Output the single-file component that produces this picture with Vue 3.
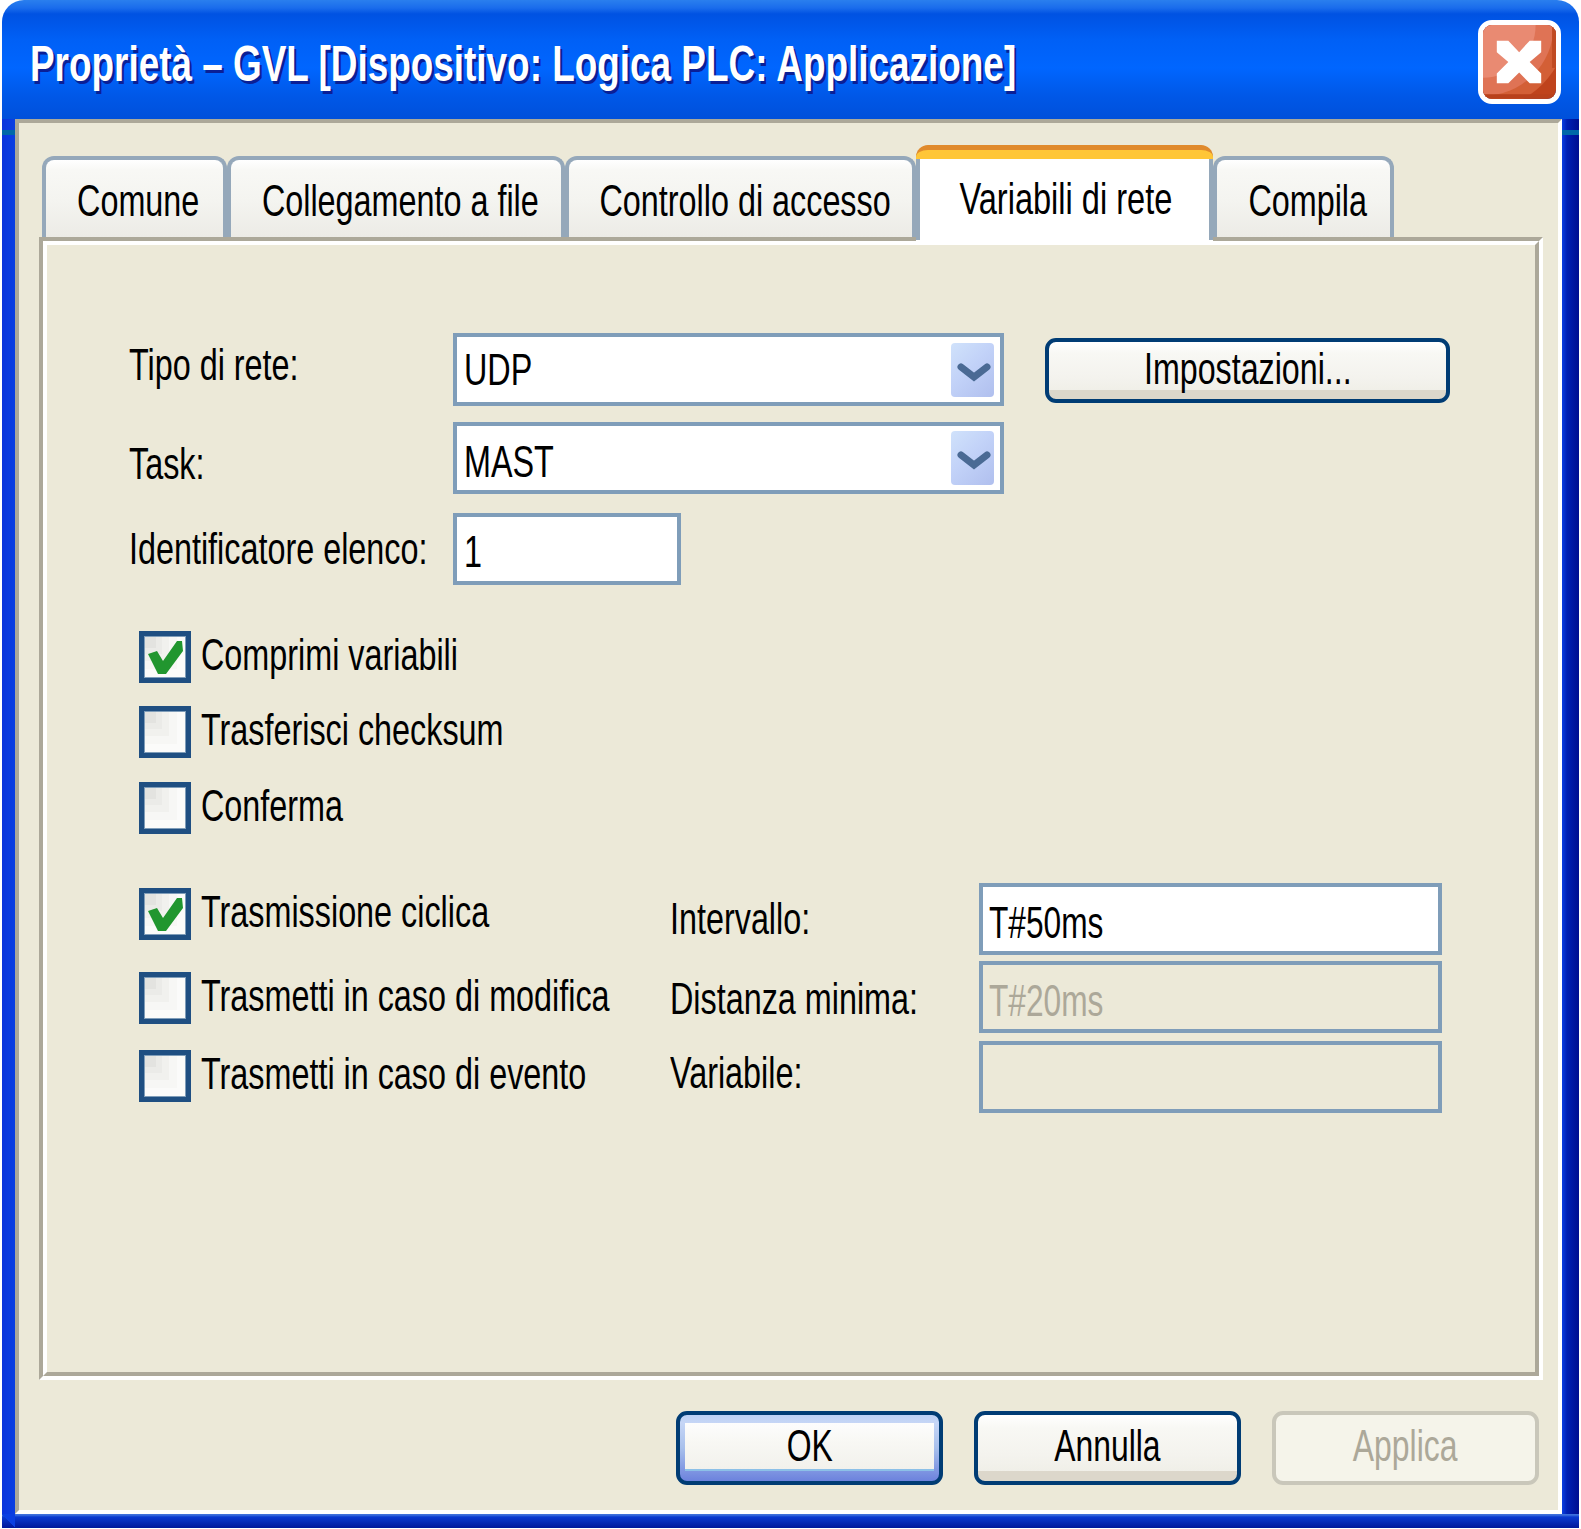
<script setup>
const tabs = [
  { label: 'Comune', width: 185, nudge: 8 },
  { label: 'Collegamento a file', width: 338, nudge: 8 },
  { label: 'Controllo di accesso', width: 351, nudge: 9 },
  { label: 'Variabili di rete', width: 297, nudge: 3, active: true },
  { label: 'Compila', width: 181, nudge: 8 },
]
const upperChecks = [
  { label: 'Comprimi variabili', checked: true, cls: 'c1' },
  { label: 'Trasferisci checksum', checked: false, cls: 'c2' },
  { label: 'Conferma', checked: false, cls: 'c3' },
]
const lowerRows = [
  { label: 'Trasmissione ciclica', checked: true, side: 'Intervallo:', value: 'T#50ms', cls: 'r1' },
  { label: 'Trasmetti in caso di modifica', checked: false, side: 'Distanza minima:', value: 'T#20ms', off: true, cls: 'r2' },
  { label: 'Trasmetti in caso di evento', checked: false, side: 'Variabile:', value: '', off: true, cls: 'r3' },
]
</script>

<template>
  <div class="window">
    <header class="titlebar">
      <span class="title t">Proprietà – GVL [Dispositivo: Logica PLC: Applicazione]</span>
      <div class="close">
        <svg viewBox="398 78 222 224" width="73" height="74">
          <rect x="398" y="78" width="222" height="224" rx="8" fill="#bf431c" />
          <circle cx="398" cy="78" r="255" fill="#d35f36" />
          <circle cx="398" cy="78" r="215" fill="#df7355" />
          <circle cx="398" cy="78" r="160" fill="#e98a72" />
          <rect x="398" y="288" width="222" height="14" fill="#b8411c" />
          <rect x="608" y="78" width="12" height="130" fill="#c04a22" />
          <polygon fill="#fff" points="440,125 475,125 508,160 540,125 575,125 575,160 540,190 575,225 575,255 540,255 508,222 475,255 440,255 440,225 475,190 440,160" />
        </svg>
      </div>
    </header>

    <div class="frame">
      <div class="client">
        <nav class="tabs">
          <div
            v-for="tab in tabs"
            :key="tab.label"
            class="tab"
            :class="{ active: tab.active }"
            :style="{ width: tab.width + 'px', paddingLeft: tab.nudge + 'px' }"
          >
            <span class="t center">{{ tab.label }}</span>
          </div>
        </nav>

        <section class="panel">
          <div class="panel-in">
            <div class="row row-net">
              <label class="lab lab-net"><span class="t">Tipo di rete:</span></label>
              <div class="combo">
                <span class="t val">UDP</span>
                <span class="drop">
                  <svg viewBox="0 0 43 54" width="43" height="54"><path d="M10 24 L23 34 L36 24" fill="none" stroke="#4a6a94" stroke-width="7" stroke-linecap="round" /></svg>
                </span>
              </div>
              <button class="btn imp"><span class="t center">Impostazioni...</span></button>
            </div>
            <div class="row row-task">
              <label class="lab lab-task"><span class="t">Task:</span></label>
              <div class="combo">
                <span class="t val">MAST</span>
                <span class="drop">
                  <svg viewBox="0 0 43 54" width="43" height="54"><path d="M10 24 L23 34 L36 24" fill="none" stroke="#4a6a94" stroke-width="7" stroke-linecap="round" /></svg>
                </span>
              </div>
            </div>
            <div class="row row-id">
              <label class="lab"><span class="t">Identificatore elenco:</span></label>
              <div class="field short"><span class="t val">1</span></div>
            </div>

            <div class="checks">
              <div v-for="c in upperChecks" :key="c.label" class="check-row" :class="c.cls">
                <span class="box">
                  <svg v-if="c.checked" viewBox="0 0 42 42" width="42" height="42"><polygon fill="#21962f" points="4,18 13,15 19,25 33,5 38,5 39,15 22,38 14,38" /></svg>
                </span>
                <span class="t cl">{{ c.label }}</span>
              </div>
            </div>

            <div class="lower">
              <div v-for="r in lowerRows" :key="r.label" class="lower-row" :class="r.cls">
                <div class="check-row inner">
                  <span class="box">
                    <svg v-if="r.checked" viewBox="0 0 42 42" width="42" height="42"><polygon fill="#21962f" points="4,18 13,15 19,25 33,5 38,5 39,15 22,38 14,38" /></svg>
                  </span>
                  <span class="t cl">{{ r.label }}</span>
                </div>
                <label class="side"><span class="t">{{ r.side }}</span></label>
                <div class="field wide" :class="{ off: r.off }"><span class="t val">{{ r.value }}</span></div>
              </div>
            </div>
          </div>
        </section>

        <footer class="actions">
          <button class="btn act ok"><span class="ok-in"><span class="t center">OK</span></span></button>
          <button class="btn act"><span class="t center lift">Annulla</span></button>
          <button class="btn act dis"><span class="t center lift">Applica</span></button>
        </footer>
      </div>
    </div>
  </div>
</template>

<style>
html, body { margin: 0; background: #fff; }
</style>

<style scoped>
.window {
  width: 1577px;
  height: 1528px;
  margin-left: 2px;
  display: flex;
  flex-direction: column;
  border-radius: 22px 22px 0 0;
  overflow: hidden;
  font-family: "Liberation Sans", Arial, sans-serif;
  font-size: 44px;
  color: #000;
}
.t {
  display: inline-block;
  white-space: nowrap;
  transform: scaleX(0.735);
  transform-origin: left center;
  line-height: 1;
}
.t.center { transform-origin: center center; }
.lift { margin-top: -4px; }
.titlebar {
  height: 119px;
  flex: none;
  box-sizing: border-box;
  display: flex;
  align-items: center;
  justify-content: space-between;
  padding: 5px 18px 0 28px;
  background: linear-gradient(180deg, #2a7fee 0, #1a6cec 8px, #0052e2 14px, #0060f6 40px, #0066ff 68px, #0058e8 95px, #0050da 119px);
}
.title {
  font-weight: 700;
  font-size: 50px;
  margin-top: 3px;
  color: #fff;
  text-shadow: 3px 3px 0 #0a1f96;
  transform: scaleX(0.738);
}
.close {
  width: 73px;
  height: 74px;
  border: 5px solid #fff;
  border-radius: 14px;
  overflow: hidden;
  display: flex;
}
.frame {
  flex: 1;
  min-height: 0;
  display: flex;
  box-sizing: border-box;
  padding: 0 17px 14px 13px;
  background:
    linear-gradient(to top right, transparent 50%, #0a3fe2 50%) left bottom / 13px 14px no-repeat,
    linear-gradient(180deg, #3d6fdc 0, #3d6fdc 1px, #0a3ad0 3px, #00179a 14px) left bottom / 100% 14px no-repeat,
    linear-gradient(#0068a8, #0068a8) left 11px / 100% 5px no-repeat,
    linear-gradient(90deg, #0a34dc 0, #0a3fe2 13px, #0a3fe2 1560px, #0020b4 1565px, #000e90 100%);
}
.client {
  flex: 1;
  display: flex;
  flex-direction: column;
  box-sizing: border-box;
  background: #ece9d8;
  border-top: 4px solid #aca899;
  border-left: 4px solid #aca899;
  border-right: 4px solid #fff;
  border-bottom: 4px solid #fff;
  padding: 22px 15px 0 20px;
}
.tabs {
  display: flex;
  height: 92px;
  flex: none;
  align-items: flex-end;
  padding-left: 3px;
}
.tab {
  box-sizing: border-box;
  height: 81px;
  border: 4px solid #95a8ba;
  border-bottom: 0;
  border-radius: 12px 12px 0 0;
  background: linear-gradient(180deg, #fff 0, #f8f8f5 10px, #f4f4f0 40px, #ecebe6 100%);
  display: flex;
  align-items: center;
  justify-content: center;
  padding-top: 4px;
}
.tab.active {
  height: 100px;
  margin-bottom: -8px;
  position: relative;
  z-index: 2;
  border: 0;
  border-top: 5px solid #e08a2c;
  border-radius: 12px 12px 0 0;
  background:
    linear-gradient(#ffc637, #ffc637) top / 100% 9px no-repeat,
    linear-gradient(#95a8ba, #95a8ba) left top / 4px 90px no-repeat,
    linear-gradient(#95a8ba, #95a8ba) right top / 4px 90px no-repeat,
    #fff;
  padding-top: 2px;
}
.tab.active .t { transform: scaleX(0.74); }
.panel {
  flex: none;
  height: 1143px;
  box-sizing: border-box;
  border: 4px solid;
  border-color: #aca899 #fff #fff #aca899;
  position: relative;
}
.panel-in {
  height: 100%;
  box-sizing: border-box;
  border: 4px solid;
  border-color: #fff #aca899 #aca899 #fff;
  padding: 88px 0 0 82px;
}
.row {
  display: flex;
}
.row-task { margin-top: 16px; }
.row-id { margin-top: 19px; }
.lab {
  width: 324px;
  flex: none;
  height: 72px;
  display: flex;
  align-items: center;
}
.lab-net { padding-bottom: 8px; box-sizing: border-box; }
.lab-task { padding-top: 12px; box-sizing: border-box; }
.combo, .field {
  box-sizing: border-box;
  border: 4px solid #7f9db9;
  background: #fff;
  display: flex;
  align-items: center;
}
.combo {
  width: 551px;
  height: 72px;
  padding: 0 6px 0 7px;
  justify-content: space-between;
}
.row-net .combo { height: 73px; }
.val { padding-top: 4px; }
.row-net .val { padding-top: 0; }
.row-task .val { padding-top: 8px; }
.drop {
  width: 43px;
  height: 54px;
  flex: none;
  border-radius: 4px;
  overflow: hidden;
  background: linear-gradient(135deg, #d0e2fb 0, #c2d2f8 45%, #b0bfee 100%);
  display: flex;
}
.field.short { width: 228px; height: 72px; padding-left: 7px; }
.field.short .val { padding-top: 6px; }
.btn {
  font: inherit;
  color: #000;
  box-sizing: border-box;
  border: 4px solid #003c74;
  border-radius: 11px;
  background: linear-gradient(180deg, #fff 0, #f8f8f4 20%, #f4f3ee 60%, #f0efe8 85%, #dcd7cb 85%, #dcd7cb 100%);
  padding: 0;
  display: flex;
  align-items: center;
  justify-content: center;
}
.imp {
  width: 405px;
  height: 65px;
  margin: 5px 0 0 41px;
}
.imp .t { margin-top: -4px; transform: scaleX(0.732); }
.act .t { transform: scaleX(0.725); }
.checks {
  padding: 46px 0 0 10px;
}
.check-row {
  display: flex;
  align-items: center;
  height: 52px;
}
.c2 { margin-top: 23px; }
.c3 { margin-top: 24px; }
.box {
  width: 52px;
  height: 52px;
  flex: none;
  box-sizing: border-box;
  border: 5px solid #1f4f82;
  box-shadow: 0 0 0 1px #7f9db9 inset;
  margin-right: 10px;
  display: block;
  background:
    linear-gradient(#e3e3e0, #e3e3e0) 0 0 / 12px 12px no-repeat,
    linear-gradient(#ebebe8, #ebebe8) 0 0 / 18px 18px no-repeat,
    linear-gradient(#f1f1ee, #f1f1ee) 0 0 / 25px 25px no-repeat,
    linear-gradient(#f7f7f5, #f7f7f5) 0 0 / 33px 33px no-repeat,
    #fbfbfa;
}
.box svg { display: block; }
.cl { margin-top: -4px; }
.lower { padding-top: 49px; }
.lower-row {
  display: flex;
  align-items: flex-start;
}
.r1 { height: 78px; }
.r2 { height: 80px; }
.r3 { height: 72px; }
.inner { width: 531px; margin-left: 10px; flex: none; }
.r1 .inner { margin-top: 5px; }
.r2 .inner { margin-top: 11px; }
.r3 .inner { margin-top: 9px; }
.side {
  width: 309px;
  flex: none;
  height: 72px;
  box-sizing: border-box;
  display: flex;
  align-items: center;
}
.r2 .side { padding-top: 4px; }
.r3 .side { padding-bottom: 8px; }
.field.wide {
  width: 463px;
  height: 72px;
  padding-left: 6px;
}
.field.wide .val { padding-top: 8px; transform: scaleX(0.72); }
.field.off {
  background: #ece9d8;
  color: #aca899;
}
.actions {
  display: flex;
  justify-content: flex-end;
  gap: 31px;
  padding: 31px 4px 0 0;
}
.act {
  width: 267px;
  height: 74px;
}
.ok {
  padding: 0;
  background: linear-gradient(180deg, #bcd0f4 0, #c6d6f6 12%, #a8c0ec 50%, #6c82dd 100%);
  align-items: stretch;
}
.ok-in {
  flex: 1;
  margin: 8px 5px 10px;
  background: linear-gradient(180deg, #fdfdfd 0, #f8f8f4 40%, #f2f1ec 100%);
  border-bottom: 2px solid #8cc0e8;
  display: flex;
  align-items: center;
  justify-content: center;
}
.dis {
  border-color: #c9c7ba;
  background: #f5f4ea;
  color: #aca899;
}
</style>
